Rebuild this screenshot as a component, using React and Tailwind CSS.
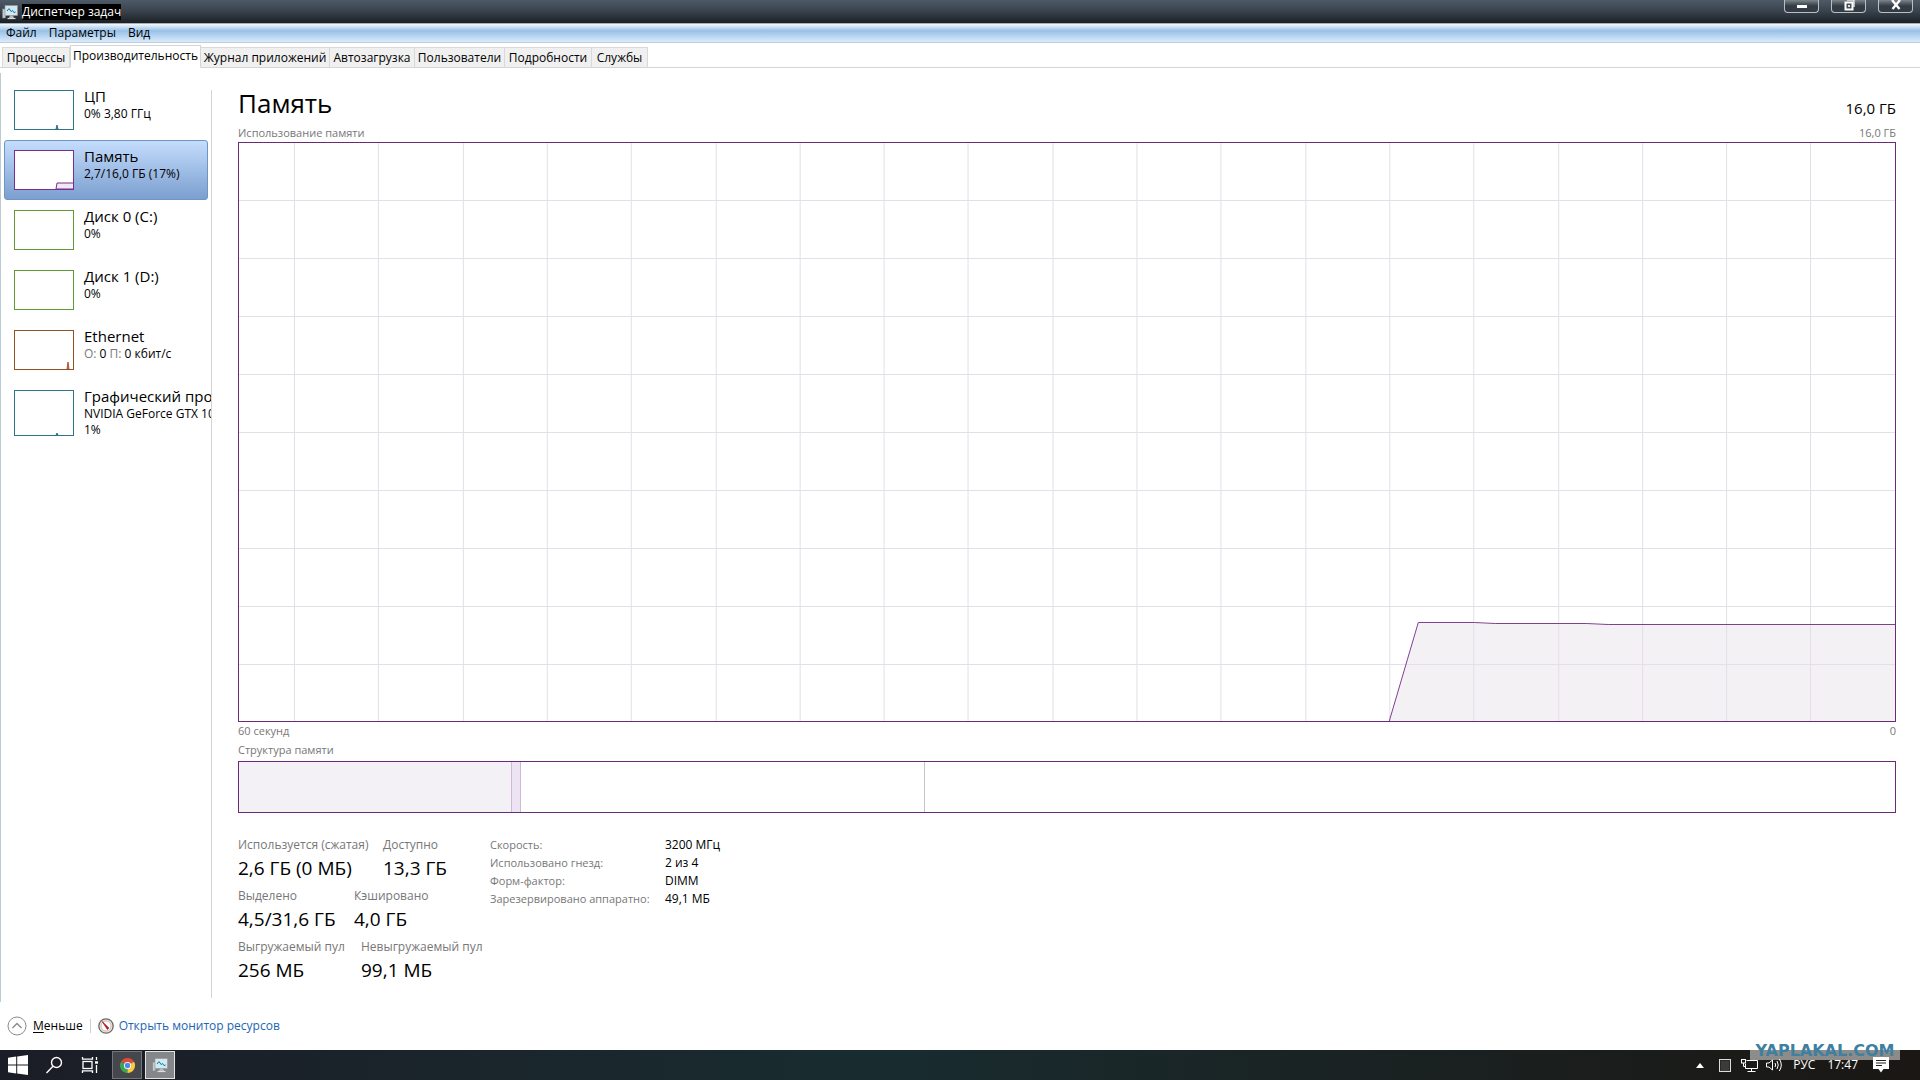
import { clsx } from "clsx";

const menuItems = ["Файл", "Параметры", "Вид"];

const tabs = [
  { name: "Процессы", width: "w-[68px]" },
  { name: "Производительность", width: "w-[131px]" },
  { name: "Журнал приложений", width: "w-[129px]" },
  { name: "Автозагрузка", width: "w-[85px]" },
  { name: "Пользователи", width: "w-[90px]" },
  { name: "Подробности", width: "w-[87px]" },
  { name: "Службы", width: "w-[56px]" },
];

const devices = [
  { name: "ЦП", info: "0% 3,80 ГГц", color: "border-[#2f7486]", spark: "M41 38L42 34L43 38Z", stroke: "#2f7486", fill: "#2f7486" },
  { name: "Память", info: "2,7/16,0 ГБ (17%)", color: "border-[#7a2d8c]", spark: "M41 38L42 32H60V38Z", stroke: "#7a2d8c", fill: "#f0e8f4" },
  { name: "Диск 0 (C:)", info: "0%", color: "border-[#5f9a33]" },
  { name: "Диск 1 (D:)", info: "0%", color: "border-[#5f9a33]" },
  {
    name: "Ethernet",
    info: (
      <>
        <span className="text-[#7a7a7a]">О:</span> 0 <span className="text-[#7a7a7a]">П:</span> 0 кбит/с
      </>
    ),
    color: "border-[#8f5424]",
    spark: "M52 38L53 31L54 38Z",
    stroke: "#b05a3c",
    fill: "#b05a3c",
  },
  { name: "Графический процессор 0", info: "NVIDIA GeForce GTX 1080", extra: "1%", color: "border-[#2f7486]", spark: "M41 44L42 42L43 44Z", stroke: "#2f7486", fill: "#2f7486" },
];

const stats = [
  [
    { label: "Используется (сжатая)", value: "2,6 ГБ (0 МБ)", width: "w-[145px]" },
    { label: "Доступно", value: "13,3 ГБ" },
  ],
  [
    { label: "Выделено", value: "4,5/31,6 ГБ", width: "w-[116px]" },
    { label: "Кэшировано", value: "4,0 ГБ" },
  ],
  [
    { label: "Выгружаемый пул", value: "256 МБ", width: "w-[123px]" },
    { label: "Невыгружаемый пул", value: "99,1 МБ" },
  ],
];

const details = [
  ["Скорость:", "3200 МГц"],
  ["Использовано гнезд:", "2 из 4"],
  ["Форм-фактор:", "DIMM"],
  ["Зарезервировано аппаратно:", "49,1 МБ"],
];

const MonitorIcon = ({ className }) => (
  <svg viewBox="0 0 16 16" className={className} aria-hidden="true">
    <rect x="0.5" y="5" width="3" height="9" fill="#c3c8ca" stroke="#7c8588" strokeWidth="0.6" />
    <rect x="3" y="1.5" width="12.5" height="10" fill="#dfe3e4" stroke="#8d979b" strokeWidth="0.6" />
    <rect x="4.5" y="3" width="9.5" height="7" fill="#c8ecf8" />
    <path d="M5 7L7 4.6L9.2 7.6L10.5 6.4L12 8.6L13.6 8" fill="none" stroke="#1d6f96" strokeWidth="1" />
    <path d="M8 11.5H11L12 14H7Z" fill="#b5bbbe" />
    <path d="M5.5 14.5H13.5" stroke="#d9dddf" strokeWidth="1.2" />
  </svg>
);

const TitleBar = () => (
  <header className="relative flex h-6 items-center gap-1 border-b border-[#a9b0b6] bg-linear-to-b from-[#4d5a67] via-[#38424c] via-50% to-[#1b2026] pl-[2px]">
    <MonitorIcon className="size-4" />
    <h1 className="bg-black text-[12px] leading-4 text-white">Диспетчер задач</h1>
    <div className="absolute top-0 right-[7px] flex gap-3">
      <button aria-label="Свернуть" className="flex h-[13px] w-[35px] justify-center rounded-b-[4px] border border-t-0 border-[#b9c0c5] bg-linear-to-b from-[#7d868d] to-[#333c44] to-50% pt-[5px]">
        <span className="h-[3px] w-[10px] bg-white" />
      </button>
      <button aria-label="Восстановить" className="flex h-[13px] w-[35px] justify-center rounded-b-[4px] border border-t-0 border-[#b9c0c5] bg-linear-to-b from-[#7d868d] to-[#333c44] to-50%">
        <svg viewBox="0 0 12 12" className="size-[12px]">
          <path d="M4 0H11V7" fill="none" stroke="#e4e7e9" strokeWidth="1.4" />
          <rect x="2.5" y="2.5" width="7" height="7" fill="#444c54" stroke="#fff" strokeWidth="2" />
          <rect x="5" y="5" width="2" height="2" fill="#dfe2e4" />
        </svg>
      </button>
      <button aria-label="Закрыть" className="flex h-[13px] w-[35px] justify-center rounded-b-[4px] border border-t-0 border-[#b9c0c5] bg-linear-to-b from-[#7d868d] to-[#333c44] to-50%">
        <svg viewBox="0 0 12 12" className="size-[12px]">
          <path d="M2 0L9.5 9M10 0L2.5 9" stroke="#fff" strokeWidth="2.4" />
        </svg>
      </button>
    </div>
  </header>
);

const Sidebar = () => (
  <nav className="w-[212px] shrink-0 border-l border-[#bccbd8]">
    <div className="mt-[17px] mb-1 flex h-[908px] flex-col overflow-x-clip border-r border-[#d4d4d8] pl-[3px]">
      {devices.map((d, i) => (
        <button
          key={d.name}
          className={clsx(
            "flex shrink-0 gap-[10px] border pl-[9px] text-left whitespace-nowrap",
            i === 1
              ? "mr-[3px] h-[60px] rounded-[3px] border-[#6f96c0] bg-linear-to-b from-[#c5ddfd] to-[#7b9fcf] pt-[5px]"
              : "border-transparent",
            i === 0 && "-mt-[5px] h-[55px]",
            i === 2 && "mt-[5px]",
            i > 1 && "h-[60px]"
          )}
        >
          <span className={clsx("mt-1 w-[60px] shrink-0 border bg-white", d.extra ? "h-[46px]" : "h-10", d.color)}>
            {d.spark && (
              <svg viewBox={d.extra ? "0 0 58 44" : "0 0 58 38"} className="block w-full">
                <path d={d.spark} fill={d.fill} stroke={d.stroke} />
              </svg>
            )}
          </span>
          <span className="flex flex-col text-[12px] leading-4 text-black">
            <span className="text-[15px] leading-5">{d.name}</span>
            <span>{d.info}</span>
            {d.extra && <span>{d.extra}</span>}
          </span>
        </button>
      ))}
    </div>
  </nav>
);

const MemoryChart = () => (
  <svg viewBox="0 0 1657 578" preserveAspectRatio="none" className="block h-[580px] w-full border border-[#6a2a7a]" role="img" aria-label="Использование памяти">
    <path d="M1151 578L1180 480H1236L1257 481H1348L1370 482H1657V578Z" fill="#f3f1f4" />
    <g stroke="#e3dee8" shapeRendering="crispEdges">
      {Array.from({ length: 19 }, (_, i) => (
        <path key={i} d={`M${Math.round(55 + i * 84.3)}.5 0V578`} />
      ))}
      {Array.from({ length: 9 }, (_, i) => (
        <path key={i} d={`M0 ${57 + i * 58}.5H1657`} />
      ))}
    </g>
    <path d="M1151 578L1180 479.5H1236L1257 480.5H1348L1370 481.5H1657" fill="none" stroke="#7f3f92" />
  </svg>
);

const MemoryPanel = () => (
  <main className="flex grow flex-col pt-[14px] pr-6 pl-[26px] text-[12px] leading-[18px] text-[#777]">
    <div className="flex h-[37px] items-start justify-between text-black">
      <h2 className="text-[26px] leading-8">Память</h2>
      <span className="pt-3 text-[15px]">16,0 ГБ</span>
    </div>
    <div className="flex justify-between text-[11px]">
      <span>Использование памяти</span>
      <span>16,0 ГБ</span>
    </div>
    <MemoryChart />
    <div className="flex justify-between text-[11px]">
      <span>60 секунд</span>
      <span>0</span>
    </div>
    <div className="pt-px text-[11px]">Структура памяти</div>
    <div className="mt-[2px] flex h-[52px] border border-[#6a2a7a]">
      <div className="w-[16.5%] border-r border-[#cbbcd2] bg-[#f3f1f5]" />
      <div className="w-[0.5%] border-r border-[#cbbcd2] bg-[#eee3f3]" />
      <div className="w-[24.4%] border-r border-[#c8c4cc]" />
    </div>
    <div className="flex pt-[23px]">
      <div className="flex w-[252px] flex-col">
        {stats.map((row) => (
          <div key={row[0].label} className="flex h-[51px] whitespace-nowrap">
            {row.map((s) => (
              <dl key={s.label} className={s.width}>
                <dt>{s.label}</dt>
                <dd className="text-[19px] leading-7 text-black">{s.value}</dd>
              </dl>
            ))}
          </div>
        ))}
      </div>
      <table className="h-[72px] text-left">
        <tbody>
          {details.map(([label, value]) => (
            <tr key={label}>
              <th scope="row" className="w-[175px] p-0 text-[11px] font-normal">{label}</th>
              <td className="p-0 text-black">{value}</td>
            </tr>
          ))}
        </tbody>
      </table>
    </div>
  </main>
);

const Footer = () => (
  <footer className="flex h-[48px] items-center pl-[7px] text-[12px] leading-4">
    <button className="flex items-center gap-[6px]">
      <svg viewBox="0 0 20 20" className="size-5" fill="none" aria-hidden="true">
        <circle cx="10" cy="10" r="9" stroke="#8a8a8a" />
        <path d="M5.5 12L10 7.5L14.5 12" stroke="#8a8a8a" strokeWidth="1.4" />
      </svg>
      <span>
        <span className="underline underline-offset-2">М</span>еньше
      </span>
    </button>
    <span className="mx-[7px] h-[14px] w-px bg-[#cfcfcf]" />
    <a href="#resmon" className="flex items-center gap-[5px] text-[#1a66b3]">
      <svg viewBox="0 0 16 16" className="size-4" aria-hidden="true">
        <circle cx="8" cy="8" r="7.2" fill="#e9e6e2" stroke="#6d6763" strokeWidth="1.3" />
        <circle cx="8" cy="8" r="5" fill="#fff" stroke="#b8a9a4" strokeWidth="0.7" />
        <path d="M4.2 3.6L10.8 10L9.4 11.4Z" fill="#b3161c" stroke="#b3161c" strokeWidth="0.8" />
      </svg>
      Открыть монитор ресурсов
    </a>
  </footer>
);

const Taskbar = () => (
  <div className="relative flex h-[30px] items-center justify-between bg-linear-to-r from-[#1b1d26] via-[#182c30] via-45% to-[#1a1714] text-white">
    <div className="flex items-center">
      <button aria-label="Пуск" className="flex w-9 justify-center">
        <svg viewBox="0 0 20 20" className="size-5" fill="#fff">
          <path d="M0 2.8L8.2 1.6V9.5H0ZM9.2 1.5L20 0V9.5H9.2ZM0 10.5H8.2V18.4L0 17.2ZM9.2 10.5H20V20L9.2 18.5Z" />
        </svg>
      </button>
      <button aria-label="Поиск" className="flex w-9 justify-center">
        <svg viewBox="0 0 18 18" className="size-[18px]" fill="none" stroke="#fff" strokeWidth="1.4">
          <circle cx="11.5" cy="6.5" r="5" />
          <path d="M8 10.2L1.5 17" />
        </svg>
      </button>
      <button aria-label="Представление задач" className="flex w-9 justify-center">
        <svg viewBox="0 0 18 18" className="size-[18px]" fill="none" stroke="#fff" strokeWidth="1.3">
          <rect x="2" y="5.5" width="9" height="7" />
          <path d="M1.5 1V3.2H11.5V1M1.5 17V14.8H11.5V17M15.5 1V4M15.5 9V17" />
          <path d="M14 6.5H17" strokeWidth="2.4" />
        </svg>
      </button>
      <button aria-label="Chrome" className="ml-1 flex h-7 w-[30px] items-center justify-center border border-[#74757a] bg-[#46474d]">
        <svg viewBox="0 0 16 16" className="size-[15px]">
          <path d="M8 8L1.07 4A8 8 0 0 1 14.93 4Z" fill="#e04a3a" />
          <path d="M8 8L1.07 4A8 8 0 0 0 8 16Z" fill="#3fa34f" />
          <path d="M8 8L8 16A8 8 0 0 0 14.93 4Z" fill="#f7cb3d" />
          <circle cx="8" cy="8" r="3.8" fill="#fff" />
          <circle cx="8" cy="8" r="2.9" fill="#4a8af0" />
        </svg>
      </button>
      <button aria-label="Диспетчер задач" className="ml-[3px] flex h-7 w-[30px] items-center justify-center border border-[#e3e3e3] bg-[#85868a]">
        <MonitorIcon className="size-4" />
      </button>
    </div>
    <div className="flex items-center pr-[31px] text-[12px]">
      <svg viewBox="0 0 8 5" className="mr-[15px] h-[5px] w-2" fill="#fff" aria-hidden="true">
        <path d="M4 0L8 5H0Z" />
      </svg>
      <svg viewBox="0 0 12 13" className="mr-[10px] h-[13px] w-3" aria-hidden="true">
        <rect x="0.5" y="0.5" width="11" height="12" fill="#2a2826" stroke="#ddd" />
        <path d="M2.5 3H10M2.5 5H10M2.5 7H10M2.5 9H10M2.5 11H10" stroke="#777" strokeDasharray="1 1" />
      </svg>
      <svg viewBox="0 0 17 14" className="mr-2 h-[14px] w-[17px]" fill="none" stroke="#fff" aria-hidden="true">
        <path d="M5.5 2.5H16.5V10.5H4.5V6M10.5 10.5V13.5M6.5 13.5H14.5" />
        <rect x="0.5" y="1.5" width="4" height="3.5" />
        <path d="M2.5 5V8.5H4.5" />
      </svg>
      <svg viewBox="0 0 17 14" className="mr-[10px] h-[14px] w-[17px]" fill="none" stroke="#fff" aria-hidden="true">
        <path d="M0.5 5H3L6.5 2V12L3 9H0.5Z" />
        <path d="M9 5Q10.3 7 9 9M11 3Q13.5 7 11 11M13.3 1Q17.3 7 13.3 13" />
      </svg>
      <span className="mr-3">РУС</span>
      <time className="mr-[15px]">17:47</time>
      <svg viewBox="0 0 16 16" className="size-4" aria-hidden="true">
        <path d="M0 0H16V12H10.5L8 15.5L5.5 12H0Z" fill="#fff" />
        <path d="M3 3.5H13M3 6H13M3 8.5H9" stroke="#222" strokeWidth="1.1" />
      </svg>
    </div>
    <div className="absolute -top-[9px] right-5 flex h-[19px] w-[150px] items-center justify-center bg-linear-to-b from-transparent from-45% to-white/50 to-45% font-['DejaVu_Sans'] text-[16px] leading-none font-bold text-[#3f7f9f]">
      YAPLAKAL.COM
    </div>
  </div>
);

const App = () => {
  return (
    <div className="flex min-h-screen flex-col bg-white font-['Open_Sans',sans-serif] text-black">
      <TitleBar />
      <div className="flex h-[19px] items-center gap-3 border-b border-[#b9cfe4] bg-linear-to-b from-[#f4f8fd] from-0% via-[#97c1e8] via-38% to-[#dcebfa] pl-[6px] text-[12px]">
        {menuItems.map((m) => (
          <button key={m}>{m}</button>
        ))}
      </div>
      <div role="tablist" className="flex h-[25px] items-end border-b border-[#d5d5d5] pl-[2px] text-[12px]">
        {tabs.map((t, i) => (
          <button
            key={t.name}
            role="tab"
            aria-selected={i === 1}
            className={clsx(
              "border whitespace-nowrap",
              t.width,
              i === 1 ? "-mb-px h-[23px] border-[#d5d5d5] border-b-white bg-white pb-px" : "h-[20px] border-b-0 border-[#d9d9d9] bg-[#f0f0f0]",
              i > 1 && "border-l-0"
            )}
          >
            {t.name}
          </button>
        ))}
      </div>
      <div className="mt-[5px] flex grow">
        <Sidebar />
        <MemoryPanel />
      </div>
      <Footer />
      <Taskbar />
    </div>
  );
};

export default App;
